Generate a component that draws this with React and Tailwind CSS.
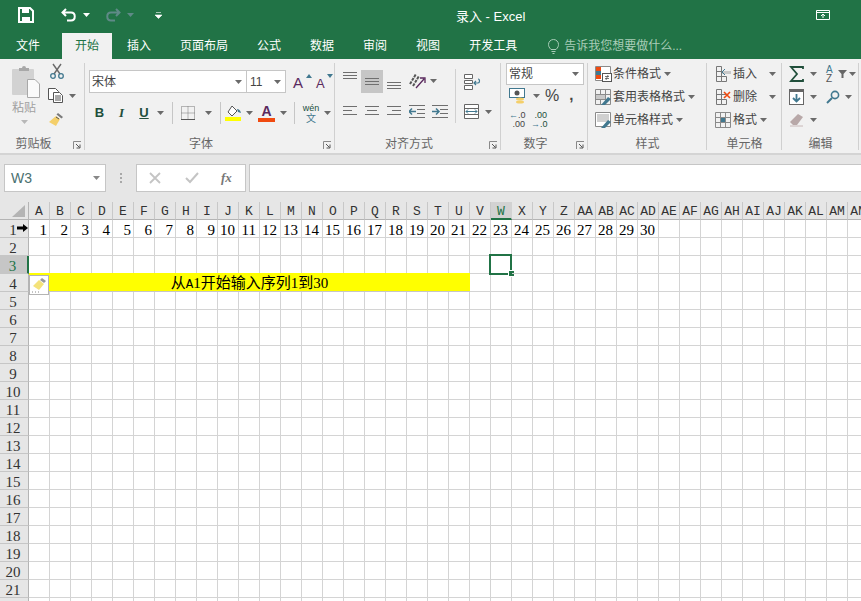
import { Fragment } from 'react';

const COLS = 'A B C D E F G H I J K L M N O P Q R S T U V W X Y Z AA AB AC AD AE AF AG AH AI AJ AK AL AM AN'.split(' ');
const TABS = ['插入', '页面布局', '公式', '数据', '审阅', '视图', '开发工具'];

const Caret = ({ color = '#6a6a6a', className = '' }) => (
  <svg width="7" height="4" viewBox="0 0 7 4" className={className}><path d="M0 0h7L3.5 4z" fill={color} /></svg>
);

const Sep = ({ className = '' }) => <div className={`w-px h-[22px] bg-[#c6c6c6] ${className}`} />;

const Launcher = () => (
  <svg width="8" height="8" viewBox="0 0 8 8" className="absolute right-[4px] bottom-[4px]">
    <path d="M0.5 8V0.5H8" fill="none" stroke="#8a8a8a" />
    <path d="M3 3l3.5 3.5M7 3.5V7H3.5" fill="none" stroke="#555" />
  </svg>
);

function Group({ width, label, children, launcher }) {
  return (
    <div className={`relative shrink-0 h-full flex flex-col ${width}`}>
      <div className="flex-1 min-h-0">{children}</div>
      <div className={`h-[16px] text-center text-[12px] leading-[14px] text-[#666] ${launcher ? 'pr-[18px]' : ''}`}>{label}</div>
      {launcher && <Launcher />}
      <div className="absolute right-0 top-[4px] bottom-[3px] w-px bg-[#d0d0d0]" />
    </div>
  );
}

function Lines({ rows }) {
  // alignment glyph: rows = [y, x, width]
  return (
    <svg width="15" height="12" viewBox="0 0 15 12">
      {rows.map(([y, x, w]) => <rect key={y} x={x} y={y} width={w} height="1" fill="#6f6f6f" />)}
    </svg>
  );
}

const L3 = (y0, step, a, b, c) => [[y0, a[0], a[1]], [y0 + step, b[0], b[1]], [y0 + step * 2, c[0], c[1]]];

const Grid3 = ({ children }) => (
  <svg width="17" height="16" viewBox="0 0 17 16">
    <path d="M.5.5h15v15H.5zM.5 5.5h15M.5 10.5h15M5.5.5v15M10.5.5v15" fill="none" stroke="#8a8a8a" />
    {children}
  </svg>
);

function StyleRow({ icon, label }) {
  return (
    <div className="flex items-center h-[23px]">
      <div className="w-[19px] flex justify-center">{icon}</div>
      <span className="text-[12px] text-[#444]">{label}</span>
      <Caret className="ml-[3px]" />
    </div>
  );
}

function CellRow({ icon, label, far }) {
  return (
    <div className="flex items-center h-[23px]">
      <div className="w-[19px] flex justify-center">{icon}</div>
      <span className="text-[12px] text-[#444]">{label}</span>
      <Caret className={far ? 'ml-[12px]' : 'ml-[3px]'} />
    </div>
  );
}

function Ribbon() {
  const full = [0, 14];
  return (
    <div className="h-[94px] bg-[#f1f1f1] flex overflow-hidden">
      <Group width="w-[85px]" label="剪贴板" launcher>
        <div className="flex pl-[11px] pt-[6px]">
          <div className="w-[32px] flex flex-col">
            <svg width="30" height="33" viewBox="0 0 30 33">
              <rect x="1" y="4" width="22" height="26" rx="1" fill="#d2d2d2" />
              <path d="M8 5V3h3a2 2 0 0 1 4 0h3v3H8z" fill="#a8a8a8" />
              <path d="M16.5 14.5H24l4.5 4.5v13.5h-12z" fill="#fafafa" stroke="#a8a8a8" />
            </svg>
            <span className="text-[12px] leading-[14px] text-[#a0a0a0] mt-[3px] pl-px">粘贴</span>
            <Caret color="#b8b8b8" className="ml-[10px] mt-[5px]" />
          </div>
          <div className="ml-[5px] flex flex-col">
            <svg width="16" height="16" viewBox="0 0 16 16" className="-mt-[2px] ml-px">
              <path d="M4 1l7 10M12 1L5 11" stroke="#6a6a6a" strokeWidth="1.4" fill="none" />
              <circle cx="4" cy="13" r="2.3" fill="none" stroke="#41788f" strokeWidth="1.3" />
              <circle cx="12" cy="13" r="2.3" fill="none" stroke="#41788f" strokeWidth="1.3" />
            </svg>
            <div className="flex items-center mt-[9px]">
              <svg width="16" height="15" viewBox="0 0 16 15">
                <path d="M.5.5h7l3 3v8H.5z" fill="#fff" stroke="#555" />
                <path d="M5.5 4.5h6l3 3v7h-9z" fill="#fff" stroke="#555" />
                <path d="M7 8h6M7 10h6M7 12h6" stroke="#555" />
              </svg>
              <Caret className="ml-[5px]" />
            </div>
            <svg width="17" height="15" viewBox="0 0 17 15" className="mt-[9px]">
              <path d="M10 1l5 4-1.5 1.5-5-4z" fill="#7a7a7a" />
              <path d="M8 4l4 3-4 7-7-4z" fill="#f4cf6a" />
              <path d="M8 5l3 2" stroke="#555" />
            </svg>
          </div>
        </div>
      </Group>

      <Group width="w-[250px]" label="字体" launcher>
        <div className="pl-[4px] pt-[11px]">
          <div className="flex items-center h-[23px]">
            <div className="w-[158px] h-[23px] bg-white border border-[#c6c6c6] flex items-center justify-between pl-[2px] pr-[4px] text-[12px] text-[#444]">
              宋体<Caret />
            </div>
            <div className="w-[40px] h-[23px] -ml-px bg-white border border-[#c6c6c6] flex items-center justify-between pl-[3px] pr-[4px] text-[12px] text-[#444]">
              11<Caret />
            </div>
            <div className="relative ml-[7px] w-[20px] h-[18px] text-[15px] leading-[20px] text-[#5a2a5e]">
              A<svg width="6" height="4" viewBox="0 0 6 4" className="absolute right-[1px] top-[1px]"><path d="M0 4h6L3 0z" fill="#41788f" /></svg>
            </div>
            <div className="relative ml-[3px] w-[18px] h-[18px] text-[13px] leading-[21px] text-[#5a2a5e]">
              A<svg width="6" height="4" viewBox="0 0 6 4" className="absolute right-[1px] top-[1px]"><path d="M0 0h6L3 4z" fill="#41788f" /></svg>
            </div>
          </div>
          <div className="flex items-center h-[22px] mt-[9px]">
            <span className="w-[21px] text-center text-[13px] font-bold text-[#214f3b]">B</span>
            <span className="w-[23px] text-center text-[13px] font-bold italic text-[#214f3b] font-['Liberation_Serif',serif]">I</span>
            <span className="w-[22px] text-center text-[13px] font-bold underline text-[#214f3b]">U</span>
            <Caret className="ml-[2px]" />
            <Sep className="ml-[8px]" />
            <svg width="14" height="14" viewBox="0 0 14 14" className="ml-[8px]">
              <path d="M.5.5h13v13H.5zM.5 7h13M7 .5v13" fill="none" stroke="#777" strokeDasharray="1 1" />
              <path d="M0 13.5h14" stroke="#555" />
            </svg>
            <Caret className="ml-[10px]" />
            <Sep className="ml-[8px]" />
            <svg width="17" height="16" viewBox="0 0 17 16" className="ml-[4px]">
              <path d="M7 1l5 5-5 5-4-4z" fill="#fff" stroke="#555" />
              <path d="M12 4c2 0 3 1 4 4l-3-1z" fill="#41788f" />
              <rect y="12" width="16" height="4" fill="#ffff00" />
            </svg>
            <Caret className="ml-[4px]" />
            <div className="relative ml-[5px] w-[17px] h-[18px] text-center text-[14px] leading-[15px] font-bold text-[#5a2a5e]">
              A<div className="absolute bottom-0 left-0 right-0 h-[4px] bg-[#f04a10]" />
            </div>
            <Caret className="ml-[5px]" />
            <Sep className="ml-[7px]" />
            <div className="ml-[8px] w-[16px] flex flex-col items-center leading-none text-[#214f3b]">
              <span className="text-[9px] leading-[10px]">wén</span>
              <span className="text-[10px] leading-[11px] text-[#41788f]">文</span>
            </div>
            <Caret className="ml-[5px]" />
          </div>
        </div>
      </Group>

      <Group width="w-[166px]" label="对齐方式" launcher>
        <div className="pl-[4px] pt-[10px] flex">
          <div className="flex flex-col">
            <div className="flex items-center h-[24px]">
              <div className="w-[22px] flex justify-center -mt-[6px]"><Lines rows={L3(0, 3, full, full, full)} /></div>
              <div className="w-[22px] h-[23px] bg-[#c6c6c6] flex justify-center items-center"><Lines rows={L3(3, 3, full, full, full)} /></div>
              <div className="w-[22px] flex justify-center mt-[6px]"><Lines rows={L3(4, 3, full, full, full)} /></div>
              <div className="w-[24px] flex justify-center">
                <svg width="18" height="18" viewBox="0 0 18 18">
                  <path d="M2 12L8 2M5 14l6-10" stroke="#555" strokeWidth="2" fill="none" strokeDasharray="3 1" />
                  <path d="M8 16L16 7M12 6h5v5" stroke="#5a2a5e" strokeWidth="1.3" fill="none" />
                </svg>
              </div>
              <Caret className="ml-[1px]" />
            </div>
            <div className="flex items-center h-[24px] mt-[6px]">
              <div className="w-[22px] flex justify-center"><Lines rows={L3(1, 4, full, [0, 9], full)} /></div>
              <div className="w-[22px] flex justify-center"><Lines rows={L3(1, 4, full, [2, 10], full)} /></div>
              <div className="w-[22px] flex justify-center"><Lines rows={L3(1, 4, full, [5, 9], full)} /></div>
              <div className="w-[24px] flex justify-center">
                <svg width="16" height="13" viewBox="0 0 16 13">
                  <path d="M0 .5h16M8 4.5h8M8 8.5h8M0 12.5h16" stroke="#6f6f6f" />
                  <path d="M0 6.5h7M3 3.5l-3 3 3 3" stroke="#41788f" strokeWidth="1.5" fill="none" />
                </svg>
              </div>
              <div className="w-[22px] flex justify-center">
                <svg width="16" height="13" viewBox="0 0 16 13">
                  <path d="M0 .5h16M8 4.5h8M8 8.5h8M0 12.5h16" stroke="#6f6f6f" />
                  <path d="M0 6.5h7M4 3.5l3 3-3 3" stroke="#41788f" strokeWidth="1.5" fill="none" />
                </svg>
              </div>
            </div>
          </div>
          <div className="ml-[4px] flex flex-col pl-[8px] border-l border-[#d0d0d0] h-[54px]">
            <svg width="17" height="16" viewBox="0 0 17 16" className="mt-[5px]">
              <path d="M.5.5h8v4h-8zM.5 6.5h8v3h-8zM.5 11.5h8v4h-8z" fill="#fff" stroke="#666" />
              <path d="M10 9h4c2 0 2-4 0-4M12 7l-2 2 2 2" stroke="#41788f" strokeWidth="1.2" fill="none" />
            </svg>
            <div className="flex items-center mt-[14px]">
              <svg width="15" height="15" viewBox="0 0 15 15">
                <path d="M.5.5h14v14H.5zM.5 4.5h14M.5 10.5h14" fill="#fff" stroke="#666" />
                <path d="M2 7.5h11" stroke="#41788f" />
                <path d="M4 5.5l-2 2 2 2M11 5.5l2 2-2 2" stroke="#41788f" fill="none" />
              </svg>
              <Caret className="ml-[6px]" />
            </div>
          </div>
        </div>
      </Group>

      <Group width="w-[87px]" label="数字" launcher>
        <div className="pl-[5px] pt-[4px]">
          <div className="w-[78px] h-[22px] bg-white border border-[#c6c6c6] flex items-center justify-between pl-[2px] pr-[4px] text-[12px] text-[#444]">
            常规<Caret />
          </div>
          <div className="flex items-center h-[22px] pl-[3px]">
            <svg width="17" height="17" viewBox="0 0 17 17">
              <rect x=".5" y=".5" width="15" height="9" fill="#fff" stroke="#41788f" />
              <circle cx="8" cy="5" r="2.5" fill="#555" />
              <ellipse cx="11" cy="11" rx="4" ry="1.5" fill="#f4cf6a" />
              <ellipse cx="11" cy="14" rx="4" ry="1.5" fill="#f4cf6a" />
            </svg>
            <Caret className="ml-[7px]" />
            <span className="ml-[5px] text-[16px] text-[#444] leading-none">%</span>
            <span className="ml-[10px] text-[15px] font-bold text-[#444] leading-none -mt-[4px]">,</span>
          </div>
          <div className="flex items-center h-[20px] mt-[3px] pl-[3px]">
            <span className="w-[16px] text-[9px] leading-[9px] text-[#444] text-right"><span className="text-[#41788f]">←</span>.0<br />.00</span>
            <span className="ml-[6px] w-[16px] text-[9px] leading-[9px] text-[#214f3b] text-right">.00<br /><span className="text-[#41788f]">→</span>.0</span>
          </div>
        </div>
      </Group>

      <Group width="w-[119px]" label="样式">
        <div className="pl-[6px] pt-[3px]">
          <StyleRow label="条件格式" icon={
            <svg width="17" height="16" viewBox="0 0 17 16">
              <path d="M.5.5h15v10h-4v4H.5z" fill="#fff" stroke="#8a8a8a" />
              <rect x="1" y="1" width="5" height="4" fill="#f04a10" /><rect x="1" y="5" width="5" height="4" fill="#41788f" /><rect x="1" y="9" width="5" height="4" fill="#f04a10" />
              <rect x="7.5" y="7.5" width="9" height="8" fill="#fff" stroke="#555" />
              <path d="M10 10.5h4M10 12.5h4M13 9l-2 5" stroke="#555" strokeWidth=".8" />
            </svg>
          } />
          <StyleRow label="套用表格格式" icon={
            <Grid3><rect x="1" y="6" width="9" height="4" fill="#c8c8c8" /><path d="M6 16l7-8 3 2-6 6z" fill="#41788f" /></Grid3>
          } />
          <StyleRow label="单元格样式" icon={
            <svg width="17" height="16" viewBox="0 0 17 16">
              <path d="M.5.5h15v14H.5z" fill="#fff" stroke="#8a8a8a" />
              <rect x="2" y="2" width="12" height="8" fill="#d0d0d0" />
              <path d="M6 16l7-8 3 2-6 6z" fill="#41788f" />
            </svg>
          } />
        </div>
      </Group>

      <Group width="w-[75px]" label="单元格">
        <div className="pl-[7px] pt-[3px]">
          <CellRow far label="插入" icon={
            <svg width="16" height="16" viewBox="0 0 16 16">
              <path d="M.5.5h5v15h-5zM.5 5.5h10M.5 10.5h10M10.5 10.5v5h-5" fill="none" stroke="#777" />
              <path d="M6 5h9v3H6z" fill="#c8c8c8" /><path d="M9 3L6 6l3 3" stroke="#41788f" fill="none" />
            </svg>
          } />
          <CellRow far label="删除" icon={
            <svg width="16" height="16" viewBox="0 0 16 16">
              <path d="M.5.5h5v15h-5zM.5 5.5h10M.5 10.5h10M10.5 10.5v5h-5" fill="none" stroke="#777" />
              <path d="M8 3l6 6M14 3L8 9" stroke="#f04a10" strokeWidth="1.6" />
            </svg>
          } />
          <CellRow label="格式" icon={
            <Grid3><rect x="6" y="6" width="4" height="4" fill="#41788f" /></Grid3>
          } />
        </div>
      </Group>

      <Group width="w-[77px]" label="编辑">
        <div className="pt-[3px] pl-[7px]">
          <div className="flex items-center h-[23px]">
            <svg width="16" height="16" viewBox="0 0 16 16"><path d="M14 3V1H2l6 7-6 7h12v-2" fill="none" stroke="#214f3b" strokeWidth="1.8" /></svg>
            <Caret className="ml-[5px]" />
            <div className="ml-[9px] w-[12px] text-[10px] leading-[9px] text-[#41788f]">A<br /><span className="text-[#555]">Z</span></div>
            <svg width="9" height="8" viewBox="0 0 9 8"><path d="M0 0h9L5.500 4v4h-2V4z" fill="#666" /></svg>
            <Caret className="ml-[2px]" />
          </div>
          <div className="flex items-center h-[23px]">
            <svg width="16" height="16" viewBox="0 0 16 16">
              <rect x=".5" y=".5" width="14" height="15" fill="#fff" stroke="#666" />
              <rect x="1" y="1" width="13" height="2" fill="#666" />
              <path d="M7.500 5v7M4 9l3.500 3.500L11 9" stroke="#41788f" strokeWidth="1.8" fill="none" />
            </svg>
            <Caret className="ml-[5px]" />
            <svg width="14" height="14" viewBox="0 0 14 14" className="ml-[9px]">
              <circle cx="9" cy="5" r="3.600" fill="none" stroke="#41788f" strokeWidth="1.600" />
              <path d="M6 8l-5 5" stroke="#41788f" strokeWidth="2" />
            </svg>
            <Caret className="ml-[5px]" />
          </div>
          <div className="flex items-center h-[23px]">
            <svg width="15" height="14" viewBox="0 0 15 14">
              <path d="M9 1l5 3-6 8H4L1 9z" fill="#b8a8a8" />
              <path d="M1 13h13" stroke="#c8b8b8" />
            </svg>
            <Caret className="ml-[6px]" />
          </div>
        </div>
      </Group>
    </div>
  );
}

function FormulaBar() {
  return (
    <div className="h-[49px] bg-[#e6e6e6] border-t-2 border-[#d4d4d4] pl-[4px] pt-[9px] overflow-hidden">
      <div className="flex items-start h-[28px]">
        <div className="shrink-0 w-[102px] h-[28px] bg-white border border-[#c6c6c6] flex items-center justify-between pl-[6px] pr-[5px] text-[14px] text-[#4a7070]">
          W3<Caret color="#888" />
        </div>
        <div className="shrink-0 w-[30px] flex justify-center items-center h-[28px]">
          <div className="flex flex-col gap-[2px]">
            <div className="w-[2px] h-[2px] bg-[#a8a8a8]" /><div className="w-[2px] h-[2px] bg-[#a8a8a8]" /><div className="w-[2px] h-[2px] bg-[#a8a8a8]" />
          </div>
        </div>
        <div className="shrink-0 w-[110px] h-[28px] bg-white border border-[#c6c6c6] flex items-center">
          <svg width="12" height="12" viewBox="0 0 12 12" className="ml-[12px]"><path d="M1 1l10 10M11 1L1 11" stroke="#c4c4c4" strokeWidth="1.800" /></svg>
          <svg width="14" height="12" viewBox="0 0 14 12" className="ml-[24px]"><path d="M1 6l4 4 8-9" stroke="#c4c4c4" strokeWidth="2" fill="none" /></svg>
          <span className="ml-[22px] text-[13px] italic font-bold text-[#777] font-['Liberation_Serif',serif]">fx</span>
        </div>
        <div className="ml-[3px] w-[640px] shrink-0 h-[28px] bg-white border border-[#c6c6c6]" />
      </div>
    </div>
  );
}

function Sheet() {
  return (
    <div className="flex-1 bg-white overflow-hidden min-h-0">
      <div className="flex h-[18px] bg-[#e6e6e6] font-['Liberation_Mono',monospace] text-[13px] leading-[20px] text-[#333]">
        <div className="relative shrink-0 w-[29px] border-r border-b border-[#b4b4b4]">
          <svg width="13" height="12" viewBox="0 0 13 12" className="absolute right-[3px] bottom-[2px]"><path d="M13 0v12H0z" fill="#b4b4b4" /></svg>
        </div>
        {COLS.map((c) => (
          <div key={c} className={`shrink-0 w-[21px] text-center border-r whitespace-nowrap ${c === 'W' ? 'bg-[#d2d2d2] border-[#d2d2d2] border-b-2 border-b-[#217346] text-[#217346]' : 'border-[#c8c8c8] border-b border-b-[#b4b4b4]'}`}>{c}</div>
        ))}
      </div>
      {Array.from({ length: 22 }, (_, i) => i + 1).map((r) => (
        <div key={r} className="flex h-[18px] font-['Liberation_Serif',serif] text-[15px] leading-[20px]">
          <div className={`relative shrink-0 w-[29px] text-center pr-[2px] border-b border-[#c6c6c6] border-r ${r === 3 ? 'bg-[#c6c6c6] text-[#217346] border-r-2 border-r-[#217346]' : 'bg-[#e6e6e6] text-[#333] border-r-[#b4b4b4]'}`}>
            {r < 22 && <span>{r}</span>}
            {r === 1 && (
              <svg width="11" height="8" viewBox="0 0 11 8" className="absolute left-[17px] top-[4px]"><path d="M0 2.500h6V0l5 4-5 4V5.500H0z" fill="#000" /></svg>
            )}
          </div>
          {r === 4 ? (
            <Fragment>
              <div className="relative shrink-0 w-[441px] h-[19px] -mt-px bg-[#ffff00] border-b border-[#c6c6c6] text-center text-black leading-[21px] font-['Liberation_Serif','Noto_Sans_CJK_SC',sans-serif]">
                从<span className="font-['Liberation_Mono',monospace] text-[12.5px]">A</span>1开始输入序列1到30
                <div className="absolute left-0 top-[2px] w-[20px] h-[20px] bg-white border border-[#b4b4b4] flex items-center justify-center">
                  <svg width="16" height="16" viewBox="0 0 16 16">
                    <path d="M11 1l4 3-2 2-4-3z" fill="#9a9a9a" />
                    <path d="M8 3l5 4-5 6-6-4z" fill="#f4e27a" />
                    <path d="M1 15h1M4 15h1M7 15h1" stroke="#888" />
                  </svg>
                </div>
              </div>
              {COLS.slice(21).map((c) => <div key={c} className="shrink-0 w-[21px] border-r border-b border-[#d4d4d4]" />)}
            </Fragment>
          ) : (
            COLS.map((c, i) => (
              <div key={c} className={`relative shrink-0 w-[21px] border-r border-b border-[#d4d4d4] text-right text-black ${i < 9 ? 'pr-[2px]' : 'pr-[3px]'}`}>
                {r === 1 && i < 30 ? i + 1 : ''}
                {r === 3 && c === 'W' && (
                  <div className="absolute -left-[2px] -top-[2px] w-[23px] h-[21px] border-2 border-[#217346]">
                    <div className="absolute -right-[4px] -bottom-[3px] w-[5px] h-[5px] bg-[#217346] outline outline-white" />
                  </div>
                )}
              </div>
            ))
          )}
        </div>
      ))}
    </div>
  );
}

export default function App() {
  return (
    <div className="w-[861px] h-[601px] overflow-hidden flex flex-col font-['Liberation_Sans','Noto_Sans_CJK_SC',sans-serif]">
      <div className="h-[59px] bg-[#217346] shrink-0 text-white">
        <div className="h-[33px] pb-[3px] flex items-center">
          <svg width="16" height="16" viewBox="0 0 16 16" className="ml-[18px]">
            <path d="M1 1h11l3 3v11H1z" fill="none" stroke="#fff" strokeWidth="2" />
            <path d="M4 1h7v5H4zM4 10h8v5H4z" fill="#fff" />
          </svg>
          <svg width="16" height="14" viewBox="0 0 16 14" className="ml-[27px]">
            <path d="M5 1L1.500 4.500 5 8M2 4.500h8c5 0 5 8 0 8H6" fill="none" stroke="#fff" strokeWidth="2" />
          </svg>
          <Caret color="#fff" className="ml-[6px]" />
          <svg width="16" height="14" viewBox="0 0 16 14" className="ml-[15px]">
            <path d="M11 1l3.500 3.500L11 8M14 4.500H6c-5 0-5 8 0 8h4" fill="none" stroke="#5f8a87" strokeWidth="2" />
          </svg>
          <Caret color="#5f8a87" className="ml-[6px]" />
          <svg width="7" height="7" viewBox="0 0 7 7" className="ml-[21px]"><path d="M1 .5h5M0 3h7l-3.500 3.500z" stroke="#fff" strokeWidth=".6" fill="#fff" /></svg>
          <span className="ml-[294px] mt-[3px] text-[13px]">录入 - Excel</span>
          <svg width="14" height="10" viewBox="0 0 14 10" className="ml-[291px]">
            <path d="M.5.500h13v9H.5zM.5 2.500h13" fill="none" stroke="#fff" />
            <path d="M7 8V4M5 6l2-2 2 2" fill="none" stroke="#fff" />
          </svg>
        </div>
        <div className="h-[26px] flex items-stretch gap-px text-[12px] leading-[26px]">
          <div className="pl-[16px] pr-[21px]">文件</div>
          <div className="px-[13px] bg-[#f1f1f1] text-[#217346]">开始</div>
          {TABS.map((t) => <div key={t} className="px-[14px]">{t}</div>)}
          <div className="ml-[16px] flex items-center text-[#a9cdb8] text-[12px]">
            <svg width="11" height="15" viewBox="0 0 11 15">
              <path d="M3 10.500C1 8.500 .5 7 .5 5.500a5 5 0 0 1 10 0c0 1.500-.5 3-2.500 5z" fill="none" stroke="#a9cdb8" />
              <path d="M3.500 12.500h4M4.500 14.500h2" stroke="#a9cdb8" />
            </svg>
            <span className="ml-[5px]">告诉我您想要做什么...</span>
          </div>
        </div>
      </div>
      <Ribbon />
      <FormulaBar />
      <Sheet />
    </div>
  );
}
